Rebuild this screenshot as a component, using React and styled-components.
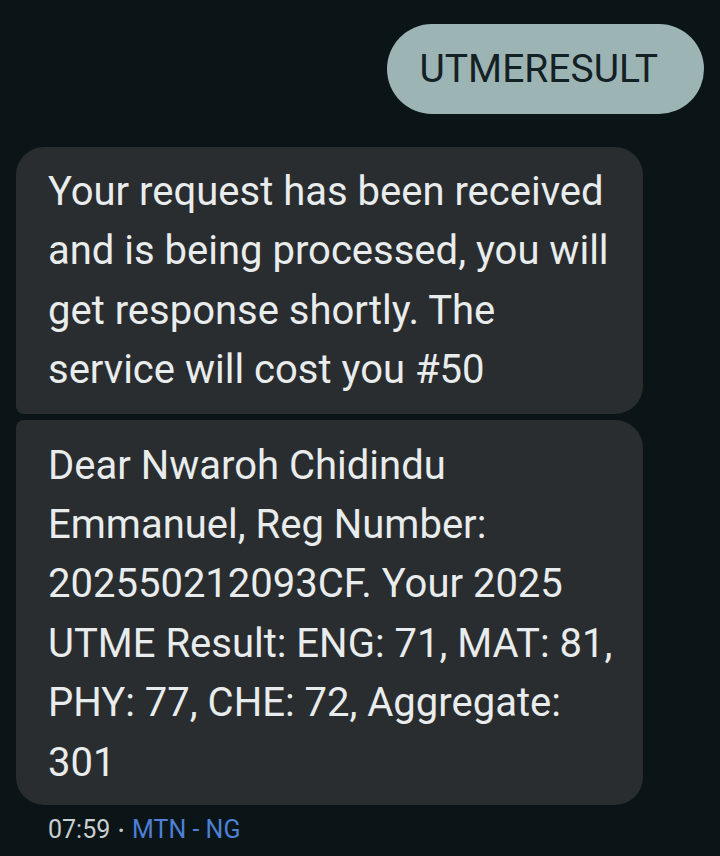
import React from 'react';
import styled, { createGlobalStyle } from 'styled-components';

const GlobalStyle = createGlobalStyle`
  html, body {
    margin: 0;
    padding: 0;
    background: #0b1517;
  }
  body {
    font-family: Roboto, "Noto Sans", "Liberation Sans", sans-serif;
  }
`;

const Thread = styled.div`
  width: 720px;
  min-height: 856px;
  box-sizing: border-box;
  padding: 24px 16px 0 16px;
  display: flex;
  flex-direction: column;
  background: #0b1517;
`;

const SentBubble = styled.div`
  align-self: flex-end;
  height: 90px;
  box-sizing: border-box;
  padding: 0 46px 0 33px;
  display: flex;
  align-items: center;
  border-radius: 45px;
  background: #9cb4b4;
  color: #142124;
  font-size: 39px;
`;

const Group = styled.div`
  margin-top: 33px;
  display: flex;
  flex-direction: column;
  gap: 6px;
`;

const ReceivedBubble = styled.div`
  width: 627px;
  box-sizing: border-box;
  padding: ${p => (p.$first ? '15px 32px 14px' : '16px 32px 13px')};
  background: #2a2d2f;
  color: #e9ecec;
  font-size: 40px;
  line-height: 59.4px;
  border-radius: ${p => (p.$first ? '28px 28px 28px 8px' : '8px 28px 28px 28px')};
`;

const Line = styled.span`
  display: block;
  white-space: nowrap;
`;

const Meta = styled.div`
  margin-top: 10px;
  padding-left: 32px;
  font-size: 25px;
  color: #c9cfd0;
  display: flex;
  align-items: center;
  gap: 8px;
`;

const Dot = styled.span`
  font-size: 17px;
`;

const Carrier = styled.span`
  color: #4d7fd6;
`;

const first = [
  'Your request has been received',
  'and is being processed, you will',
  'get response shortly. The',
  'service will cost you #50',
];

const second = [
  'Dear Nwaroh Chidindu',
  'Emmanuel, Reg Number:',
  '202550212093CF. Your 2025',
  'UTME Result: ENG: 71, MAT: 81,',
  'PHY: 77, CHE: 72, Aggregate:',
  '301',
];

export default function App() {
  return (
    <>
      <GlobalStyle />
      <Thread>
        <SentBubble>UTMERESULT</SentBubble>
        <Group>
          <ReceivedBubble $first>
            {first.map(t => <Line key={t}>{t}</Line>)}
          </ReceivedBubble>
          <ReceivedBubble>
            {second.map(t => <Line key={t}>{t}</Line>)}
          </ReceivedBubble>
        </Group>
        <Meta>
          <span>07:59</span>
          <Dot>•</Dot>
          <Carrier>MTN - NG</Carrier>
        </Meta>
      </Thread>
    </>
  );
}
